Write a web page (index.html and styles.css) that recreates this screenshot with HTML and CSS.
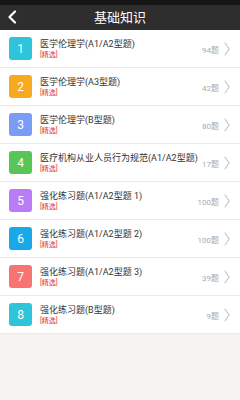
FILE: index.html
```html
<!DOCTYPE html>
<html lang="zh-CN">
<head>
<meta charset="UTF-8" />
<meta name="viewport" content="width=device-width, initial-scale=1" />
<title>基础知识</title>
<link rel="stylesheet" href="styles.css">
</head>
<body>
  <div class="statusbar"></div>
  <header class="topbar">
    <a class="back" href="#">
      <svg width="10" height="14" viewBox="0 0 10 14"><path d="M8 1.5 L2.5 7 L8 12.5" fill="none" stroke="#fff" stroke-width="2.2" stroke-linecap="round" stroke-linejoin="round"/></svg>
    </a>
    <h1>基础知识</h1>
  </header>

  <ul class="list">
    <li class="item">
      <span class="num c1">1</span>
      <div class="info">
        <div class="title">医学伦理学(A1/A2型题)</div>
        <div class="tag">[精选]</div>
      </div>
      <span class="count">94题</span>
      <svg class="arrow" width="6" height="14" viewBox="0 0 6 14"><path d="M0.7 0.7 L5.2 7 L0.7 13.3" fill="none" stroke="#b5b5b5" stroke-width="1"/></svg>
    </li>
    <li class="item">
      <span class="num c2">2</span>
      <div class="info">
        <div class="title">医学伦理学(A3型题)</div>
        <div class="tag">[精选]</div>
      </div>
      <span class="count">42题</span>
      <svg class="arrow" width="6" height="14" viewBox="0 0 6 14"><path d="M0.7 0.7 L5.2 7 L0.7 13.3" fill="none" stroke="#b5b5b5" stroke-width="1"/></svg>
    </li>
    <li class="item">
      <span class="num c3">3</span>
      <div class="info">
        <div class="title">医学伦理学(B型题)</div>
        <div class="tag">[精选]</div>
      </div>
      <span class="count">80题</span>
      <svg class="arrow" width="6" height="14" viewBox="0 0 6 14"><path d="M0.7 0.7 L5.2 7 L0.7 13.3" fill="none" stroke="#b5b5b5" stroke-width="1"/></svg>
    </li>
    <li class="item">
      <span class="num c4">4</span>
      <div class="info">
        <div class="title">医疗机构从业人员行为规范(A1/A2型题)</div>
        <div class="tag">[精选]</div>
      </div>
      <span class="count">17题</span>
      <svg class="arrow" width="6" height="14" viewBox="0 0 6 14"><path d="M0.7 0.7 L5.2 7 L0.7 13.3" fill="none" stroke="#b5b5b5" stroke-width="1"/></svg>
    </li>
    <li class="item">
      <span class="num c5">5</span>
      <div class="info">
        <div class="title">强化练习题(A1/A2型题 1)</div>
        <div class="tag">[精选]</div>
      </div>
      <span class="count">100题</span>
      <svg class="arrow" width="6" height="14" viewBox="0 0 6 14"><path d="M0.7 0.7 L5.2 7 L0.7 13.3" fill="none" stroke="#b5b5b5" stroke-width="1"/></svg>
    </li>
    <li class="item">
      <span class="num c6">6</span>
      <div class="info">
        <div class="title">强化练习题(A1/A2型题 2)</div>
        <div class="tag">[精选]</div>
      </div>
      <span class="count">100题</span>
      <svg class="arrow" width="6" height="14" viewBox="0 0 6 14"><path d="M0.7 0.7 L5.2 7 L0.7 13.3" fill="none" stroke="#b5b5b5" stroke-width="1"/></svg>
    </li>
    <li class="item">
      <span class="num c7">7</span>
      <div class="info">
        <div class="title">强化练习题(A1/A2型题 3)</div>
        <div class="tag">[精选]</div>
      </div>
      <span class="count">39题</span>
      <svg class="arrow" width="6" height="14" viewBox="0 0 6 14"><path d="M0.7 0.7 L5.2 7 L0.7 13.3" fill="none" stroke="#b5b5b5" stroke-width="1"/></svg>
    </li>
    <li class="item">
      <span class="num c8">8</span>
      <div class="info">
        <div class="title">强化练习题(B型题)</div>
        <div class="tag">[精选]</div>
      </div>
      <span class="count">9题</span>
      <svg class="arrow" width="6" height="14" viewBox="0 0 6 14"><path d="M0.7 0.7 L5.2 7 L0.7 13.3" fill="none" stroke="#b5b5b5" stroke-width="1"/></svg>
    </li>
  </ul>
</body>
</html>
```

FILE: styles.css
```css
* {
  box-sizing: border-box;
}
body {
  margin: 0;
  font-family: "Roboto", "Noto Sans CJK SC", sans-serif;
  background: #f5f3ef;
  color: #333;
  min-height: 400px;
}

.statusbar {
  height: 5px;
  background: #151515;
}

.topbar {
  height: 25px;
  background: #2e2e2e;
  display: flex;
  align-items: center;
  justify-content: center;
  position: relative;
}

.topbar h1 {
  margin: 0;
  font-size: 13px;
  line-height: 16px;
  font-weight: 400;
  color: #fff;
}

.back {
  position: absolute;
  left: 7px;
  top: 5px;
  display: flex;
}

.list {
  list-style: none;
  margin: 0;
  padding: 0;
  background: #fff;
}

.item {
  height: 38px;
  display: flex;
  align-items: center;
  padding: 0 9px;
  border-bottom: 1px solid #ebebeb;
}

.num {
  width: 23px;
  height: 23px;
  border-radius: 3px;
  color: #fff;
  font-size: 12px;
  display: flex;
  align-items: center;
  justify-content: center;
  flex-shrink: 0;
}

.c1 { background: #2ec4d9; }
.c2 { background: #f8aa1f; }
.c3 { background: #7a9cf7; }
.c4 { background: #58c656; }
.c5 { background: #b97cf6; }
.c6 { background: #1aa9e8; }
.c7 { background: #f97373; }
.c8 { background: #2ec4d9; }

.info {
  flex: 1;
  margin-left: 8px;
  min-width: 0;
  padding-top: 2px;
}

.title {
  font-size: 9px;
  line-height: 11px;
  color: #333;
  white-space: nowrap;
}

.tag {
  font-size: 7px;
  line-height: 9px;
  margin-top: 1px;
  color: #e03434;
}

.count {
  font-size: 8px;
  color: #aaa;
  margin-right: 5px;
  margin-top: 2px;
}

.arrow {
  flex-shrink: 0;
  margin-right: 1px;
}
```
